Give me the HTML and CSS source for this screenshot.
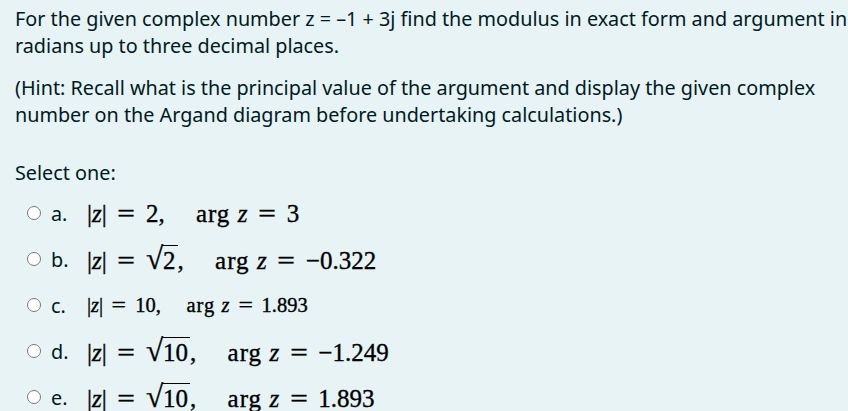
FILE: index.html
```html
<!DOCTYPE html>
<html lang="en">
<head>
  <meta charset="UTF-8">
  <title>Question</title>
  <link rel="stylesheet" href="styles.css">
</head>
<body>
  <div class="formulation">
    <!-- question text -->
    <div class="qtext">
      <p class="p-first">For the given complex number z = –1 + 3j find the modulus in exact form and argument in radians up to three decimal places.</p>
      <p class="p-hint">(Hint: Recall what is the principal value of the argument and display the given complex number on the Argand diagram before undertaking calculations.)</p>
    </div>

    <div class="prompt">Select one:</div>
    <div class="answer">
      <label class="option">
        <input type="radio" name="q1">
        <span class="letter">a.</span>
        <span class="math m-lg">
          <span class="abs">|<i>z</i>|</span><span class="op">=</span><span>2,</span><span class="gap"></span><span class="fn">arg</span><i class="zv">z</i><span class="op">=</span><span>3</span>
        </span>
      </label>
      <label class="option">
        <input type="radio" name="q1">
        <span class="letter">b.</span>
        <span class="math m-lg">
          <span class="abs">|<i>z</i>|</span><span class="op">=</span><span class="sqrt"><span class="sign">√</span><span class="rad">2</span></span><span>,</span><span class="gap"></span><span class="fn">arg</span><i class="zv">z</i><span class="op">=</span><span>−0.322</span>
        </span>
      </label>
      <label class="option">
        <input type="radio" name="q1">
        <span class="letter">c.</span>
        <span class="math m-sm">
          <span class="abs">|<i>z</i>|</span><span class="op">=</span><span>10,</span><span class="gap"></span><span class="fn">arg</span><i class="zv">z</i><span class="op">=</span><span>1.893</span>
        </span>
      </label>
      <label class="option">
        <input type="radio" name="q1">
        <span class="letter">d.</span>
        <span class="math m-lg">
          <span class="abs">|<i>z</i>|</span><span class="op">=</span><span class="sqrt"><span class="sign">√</span><span class="rad">10</span></span><span>,</span><span class="gap"></span><span class="fn">arg</span><i class="zv">z</i><span class="op">=</span><span>−1.249</span>
        </span>
      </label>
      <label class="option">
        <input type="radio" name="q1">
        <span class="letter">e.</span>
        <span class="math m-lg">
          <span class="abs">|<i>z</i>|</span><span class="op">=</span><span class="sqrt"><span class="sign">√</span><span class="rad">10</span></span><span>,</span><span class="gap"></span><span class="fn">arg</span><i class="zv">z</i><span class="op">=</span><span>1.893</span>
        </span>
      </label>
    </div>
  </div>
</body>
</html>
```

FILE: styles.css
```css
/* page */
body {
  margin: 0;
  background-color: #e7f3f5;
  font-family: 'Noto Sans', 'Open Sans', sans-serif;
  color: #001a1e;
  font-size: 19.8px;
  line-height: 27px;
}

.formulation {
  padding: 5px 0 0 15px;
  white-space: nowrap;
  overflow: hidden;
}

.qtext p {
  margin: 0 0 15px;
  white-space: normal;
}

.p-first { width: 860px; }
.p-hint { width: 820px; }

.prompt {
  margin-top: 31px;
}

.answer {
  margin-top: 4px;
}

/* options */
.option {
  display: flex;
  align-items: center;
  height: 46px;
  padding-left: 12px;
}

.option input {
  width: 14px;
  height: 14px;
  margin: 0 10px 0 0;
}

.letter {
  width: 36px;
}

/* math */
.math {
  font-family: 'Liberation Serif', 'DejaVu Serif', serif;
  display: flex;
  align-items: baseline;
  color: #000;
  -webkit-text-stroke: 0.35px #000;
}

.m-lg { font-size: 25px; }
.m-sm { font-size: 20.5px; }

.math i {
  font-style: italic;
}

.op {
  margin: 0 0.5em;
  transform: scaleX(1.25);
}

.fn {
  letter-spacing: 1px;
}

.zv {
  margin-left: 0.3em;
}

.gap {
  width: 1.25em;
}

.sqrt {
  display: inline-flex;
  align-items: flex-start;
}

.sign {
  font-size: 1.25em;
  line-height: 1;
  margin-right: -1px;
}

.rad {
  border-top: 1.5px solid #000;
  line-height: 1;
  margin-top: 2px;
  padding: 2px 2px 0 1px;
}
```
